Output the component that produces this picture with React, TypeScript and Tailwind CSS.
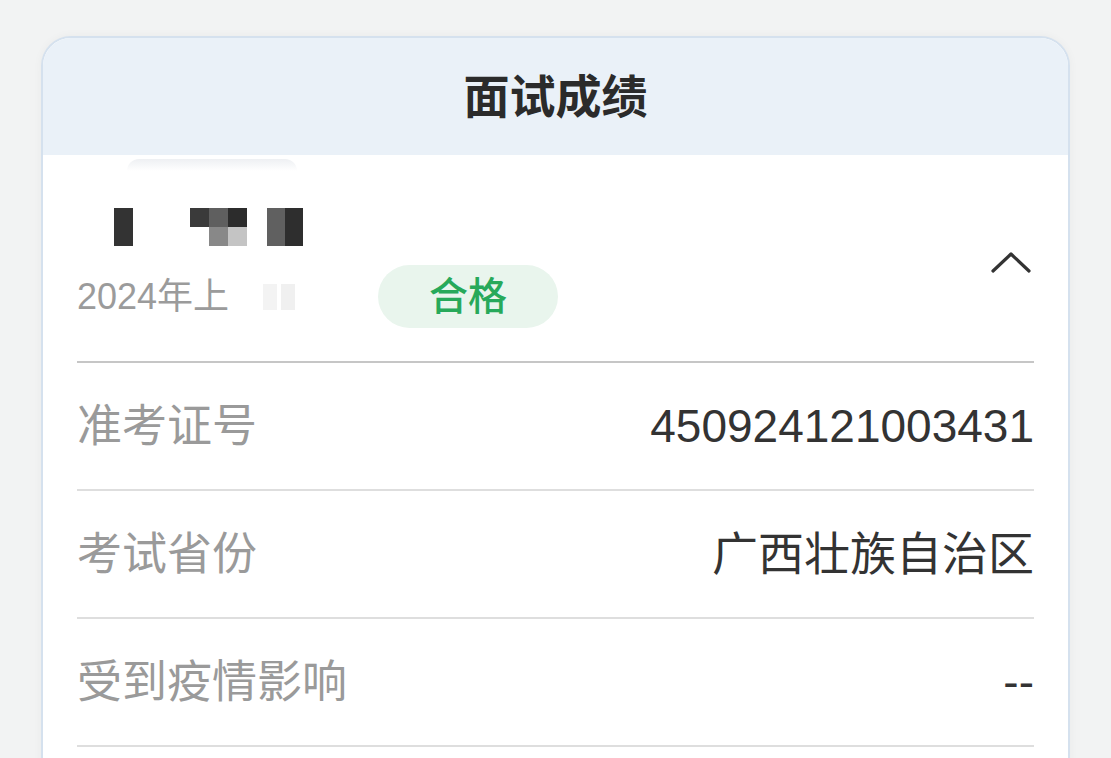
const FONT = { fontFamily: '"Liberation Sans", "Noto Sans CJK SC", sans-serif' };

const ROWS = [
    { label: '准考证号', value: '450924121003431' },
    { label: '考试省份', value: '广西壮族自治区' },
    { label: '受到疫情影响', value: '--' },
];

// pixelated name, drawn as mosaic cells
function NameMosaic() {
    return (
        <div className="flex h-[38px] items-stretch">
            <div className="ml-[37px] w-[19px] bg-[#333333]" />
            <div className="ml-[57px] flex flex-col">
                <div className="flex h-[19px]">
                    <div className="w-[19px] bg-[#3a3a3a]" />
                    <div className="w-[19px] bg-[#5f5f5f]" />
                    <div className="w-[19px] bg-[#2c2c2c]" />
                </div>
                <div className="flex h-[19px]">
                    <div className="w-[19px] bg-white" />
                    <div className="w-[19px] bg-[#888888]" />
                    <div className="w-[19px] bg-[#c4c4c4]" />
                </div>
            </div>
            <div className="ml-[20px] w-[18px] bg-[#606060]" />
            <div className="w-[18px] bg-[#2e2e2e]" />
        </div>
    );
}

export default function App() {
    return (
        <div className="min-h-[758px] overflow-hidden bg-[#f2f3f3] pt-[36px]" style={FONT}>
            <div className="mx-[41px] h-[800px] overflow-hidden rounded-[30px] border-2 border-[#d5e1ee] bg-white shadow-[0_0_10px_rgba(0,0,0,0.04)]">
                <div className="flex h-[117px] items-center justify-center bg-[#eaf1f8]">
                    <h1 className="text-[46px] font-bold leading-none text-[#2b2b2b]">面试成绩</h1>
                </div>

                <div className="px-[34px]">
                    <div className="relative flex h-[208px] items-start justify-between border-b-2 border-[#c6c6c6]">
                        <div className="absolute left-[50px] top-[4px] h-[12px] w-[170px] rounded-t-[40px] bg-gradient-to-b from-[#eef0f3] to-white" />
                        <div className="flex flex-col pt-[53px]">
                            <NameMosaic />
                            <div className="mt-[19px] flex h-[63px] items-center">
                                <div className="flex w-[301px] items-center">
                                    <span className="text-[36px] leading-none text-[#9b9b9b]">2024年上</span>
                                    <span className="ml-[34px] h-[26px] w-[14px] bg-[#f3f3f3]" />
                                    <span className="ml-[4px] h-[26px] w-[14px] bg-[#f0f0f0]" />
                                </div>
                                <div className="flex h-[63px] w-[180px] items-center justify-center rounded-full bg-[#e9f5ed]">
                                    <span className="text-[39px] font-medium leading-none text-[#27a95a]">合格</span>
                                </div>
                            </div>
                        </div>
                        <svg
                            viewBox="0 0 42 26"
                            className="mr-[2px] mt-[95px] h-[26px] w-[42px] text-[#333333]"
                            fill="none"
                            stroke="currentColor"
                            strokeWidth={3.2}
                            strokeLinecap="round"
                            strokeLinejoin="round"
                        >
                            <polyline points="3,21 21,4 39,21" />
                        </svg>
                    </div>

                    {ROWS.map((row) => (
                        <div
                            key={row.label}
                            className="flex h-[128px] items-center justify-between border-b-2 border-[#dedede]"
                        >
                            <span className="text-[45px] leading-none text-[#9a9a9a]">{row.label}</span>
                            <span className="text-[46px] leading-none text-[#333333]">{row.value}</span>
                        </div>
                    ))}
                </div>
            </div>
        </div>
    );
}
